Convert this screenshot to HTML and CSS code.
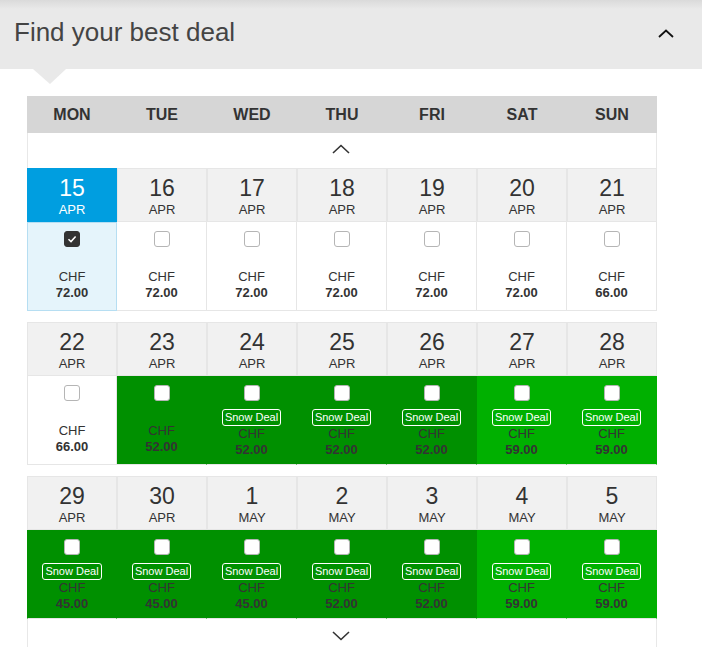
FILE: index.html
```
<!DOCTYPE html>
<html lang="en">
<head>
<meta charset="utf-8">
<title>Find your best deal</title>
<link rel="stylesheet" href="styles.css">
</head>
<body>
<div class="panel">
  <header class="bar">
    <h1>Find your best deal</h1>
    <svg class="bar-chev" width="16" height="9" viewBox="0 0 16 9"><path d="M1 8 L8 1.5 L15 8" fill="none" stroke="#111" stroke-width="1.8"/></svg>
  </header>
  <span class="pointer"></span>

  <div class="cal">
    <div class="dow">
      <div>MON</div><div>TUE</div><div>WED</div><div>THU</div><div>FRI</div><div>SAT</div><div>SUN</div>
    </div>
    <div class="nav">
      <svg width="18" height="10" viewBox="0 0 18 10"><path d="M1 9 L9 1.5 L17 9" fill="none" stroke="#333" stroke-width="1.6"/></svg>
    </div>

    <div class="week">
      <div class="wk-head">
        <div class="d sel"><span class="n">15</span><span class="m">APR</span></div>
        <div class="d"><span class="n">16</span><span class="m">APR</span></div>
        <div class="d"><span class="n">17</span><span class="m">APR</span></div>
        <div class="d"><span class="n">18</span><span class="m">APR</span></div>
        <div class="d"><span class="n">19</span><span class="m">APR</span></div>
        <div class="d"><span class="n">20</span><span class="m">APR</span></div>
        <div class="d"><span class="n">21</span><span class="m">APR</span></div>
      </div>
      <div class="wk-body">
        <div class="c sel"><span class="cb on"><svg width="14" height="14" viewBox="0 0 14 14"><path d="M3.5 7.2 L6 9.6 L10.6 4.4" fill="none" stroke="#fff" stroke-width="1.5"/></svg></span><span class="slot"></span><span class="cur">CHF</span><span class="pr">72.00</span></div>
        <div class="c"><span class="cb"></span><span class="slot"></span><span class="cur">CHF</span><span class="pr">72.00</span></div>
        <div class="c"><span class="cb"></span><span class="slot"></span><span class="cur">CHF</span><span class="pr">72.00</span></div>
        <div class="c"><span class="cb"></span><span class="slot"></span><span class="cur">CHF</span><span class="pr">72.00</span></div>
        <div class="c"><span class="cb"></span><span class="slot"></span><span class="cur">CHF</span><span class="pr">72.00</span></div>
        <div class="c"><span class="cb"></span><span class="slot"></span><span class="cur">CHF</span><span class="pr">72.00</span></div>
        <div class="c"><span class="cb"></span><span class="slot"></span><span class="cur">CHF</span><span class="pr">66.00</span></div>
      </div>
    </div>

    <div class="week">
      <div class="wk-head">
        <div class="d"><span class="n">22</span><span class="m">APR</span></div>
        <div class="d"><span class="n">23</span><span class="m">APR</span></div>
        <div class="d"><span class="n">24</span><span class="m">APR</span></div>
        <div class="d"><span class="n">25</span><span class="m">APR</span></div>
        <div class="d"><span class="n">26</span><span class="m">APR</span></div>
        <div class="d"><span class="n">27</span><span class="m">APR</span></div>
        <div class="d"><span class="n">28</span><span class="m">APR</span></div>
      </div>
      <div class="wk-body">
        <div class="c"><span class="cb"></span><span class="slot"></span><span class="cur">CHF</span><span class="pr">66.00</span></div>
        <div class="c g1"><span class="cb"></span><span class="slot"></span><span class="cur">CHF</span><span class="pr">52.00</span></div>
        <div class="c g1"><span class="cb"></span><span class="slot has"><span class="badge">Snow Deal</span></span><span class="cur">CHF</span><span class="pr">52.00</span></div>
        <div class="c g1"><span class="cb"></span><span class="slot has"><span class="badge">Snow Deal</span></span><span class="cur">CHF</span><span class="pr">52.00</span></div>
        <div class="c g1"><span class="cb"></span><span class="slot has"><span class="badge">Snow Deal</span></span><span class="cur">CHF</span><span class="pr">52.00</span></div>
        <div class="c g2"><span class="cb"></span><span class="slot has"><span class="badge">Snow Deal</span></span><span class="cur">CHF</span><span class="pr">59.00</span></div>
        <div class="c g2"><span class="cb"></span><span class="slot has"><span class="badge">Snow Deal</span></span><span class="cur">CHF</span><span class="pr">59.00</span></div>
      </div>
    </div>

    <div class="week week-last">
      <div class="wk-head">
        <div class="d"><span class="n">29</span><span class="m">APR</span></div>
        <div class="d"><span class="n">30</span><span class="m">APR</span></div>
        <div class="d"><span class="n">1</span><span class="m">MAY</span></div>
        <div class="d"><span class="n">2</span><span class="m">MAY</span></div>
        <div class="d"><span class="n">3</span><span class="m">MAY</span></div>
        <div class="d"><span class="n">4</span><span class="m">MAY</span></div>
        <div class="d"><span class="n">5</span><span class="m">MAY</span></div>
      </div>
      <div class="wk-body">
        <div class="c g1"><span class="cb"></span><span class="slot has"><span class="badge">Snow Deal</span></span><span class="cur">CHF</span><span class="pr">45.00</span></div>
        <div class="c g1"><span class="cb"></span><span class="slot has"><span class="badge">Snow Deal</span></span><span class="cur">CHF</span><span class="pr">45.00</span></div>
        <div class="c g1"><span class="cb"></span><span class="slot has"><span class="badge">Snow Deal</span></span><span class="cur">CHF</span><span class="pr">45.00</span></div>
        <div class="c g1"><span class="cb"></span><span class="slot has"><span class="badge">Snow Deal</span></span><span class="cur">CHF</span><span class="pr">52.00</span></div>
        <div class="c g1"><span class="cb"></span><span class="slot has"><span class="badge">Snow Deal</span></span><span class="cur">CHF</span><span class="pr">52.00</span></div>
        <div class="c g2"><span class="cb"></span><span class="slot has"><span class="badge">Snow Deal</span></span><span class="cur">CHF</span><span class="pr">59.00</span></div>
        <div class="c g2"><span class="cb"></span><span class="slot has"><span class="badge">Snow Deal</span></span><span class="cur">CHF</span><span class="pr">59.00</span></div>
      </div>
    </div>

    <div class="nav nav-down">
      <svg width="18" height="10" viewBox="0 0 18 10"><path d="M1 1 L9 8.5 L17 1" fill="none" stroke="#333" stroke-width="1.6"/></svg>
    </div>
  </div>
</div>
</body>
</html>
```

FILE: styles.css
```
html, body {
  margin: 0;
  padding: 0;
  overflow: hidden;
  background: #fff;
}
body {
  font-family: "Liberation Sans", Arial, sans-serif;
  color: #333;
}
.panel {
  position: relative;
  width: 702px;
}
.bar {
  height: 69px;
  background: linear-gradient(#dadada 0px, #e9e9e9 9px, #e9e9e9 100%);
  display: flex;
  justify-content: space-between;
  align-items: flex-start;
  padding: 0 28px 0 14px;
  box-sizing: border-box;
}
.bar h1 {
  margin: 17px 0 0;
  font-size: 26px;
  line-height: 30px;
  font-weight: normal;
  color: #444;
}
.bar-chev {
  margin-top: 29px;
}
.pointer {
  position: absolute;
  left: 33px;
  top: 69px;
  width: 0;
  height: 0;
  border-left: 17px solid transparent;
  border-right: 16px solid transparent;
  border-top: 15px solid #e9e9e9;
}
.cal {
  margin: 27px 0 0 27px;
  width: 630px;
}
.dow {
  display: grid;
  grid-template-columns: repeat(7, 90px);
  height: 37px;
  background: #d6d6d6;
  align-items: center;
  text-align: center;
  font-weight: bold;
  font-size: 16px;
  color: #333;
}
.nav {
  height: 35px;
  box-sizing: border-box;
  border-left: 1px solid #e8e8e8;
  border-right: 1px solid #e8e8e8;
  display: flex;
  justify-content: center;
  align-items: flex-start;
  padding-top: 11px;
  padding-right: 2px;
}
.nav-down {
  height: 28px;
  padding-top: 12px;
}
.nav svg {
  display: block;
}
.week {
  margin-bottom: 11px;
}
.week.week-last {
  margin-bottom: 0;
}
.wk-head {
  display: grid;
  grid-template-columns: repeat(7, 90px);
  height: 54px;
}
.d {
  box-sizing: border-box;
  border: 1px solid #e6e6e6;
  background: #f1f1f1;
  display: flex;
  flex-direction: column;
  align-items: center;
  padding-top: 8px;
  color: #333;
}
.d .n {
  font-size: 23px;
  line-height: 23px;
}
.d .m {
  margin-top: 3px;
  font-size: 13px;
  line-height: 13px;
}
.d.sel {
  background: #009ee0;
  border-color: #009ee0;
  color: #fff;
}
.wk-body {
  display: grid;
  grid-template-columns: repeat(7, 90px);
  height: 89px;
}
.c {
  box-sizing: border-box;
  border-right: 1px solid #e6e6e6;
  border-bottom: 1px solid #e6e6e6;
  background: #fff;
  display: flex;
  flex-direction: column;
  align-items: center;
  padding-top: 9px;
  font-size: 13px;
  line-height: 16px;
  color: #333;
}
.c:first-child {
  border-left: 1px solid #e6e6e6;
}
.c.sel {
  background: #e5f4fb;
  border: 1px solid #b6def2;
  padding-top: 8px;
}
.c.g1 {
  background: #009000;
  border-right-color: transparent;
  color: #333;
}
.c.g2 {
  background: #00b000;
  border-right-color: transparent;
  color: #333;
}
.c.g1:first-child {
  border-left-color: transparent;
}
.cb {
  width: 16px;
  height: 16px;
  box-sizing: border-box;
  border: 1px solid #b5b5b5;
  border-radius: 3px;
  background: #fff;
  display: flex;
  align-items: center;
  justify-content: center;
}
.cb.on {
  background: #333;
  border-color: #333;
}
.cb svg {
  display: block;
}
.slot {
  height: 22px;
  display: flex;
  align-items: flex-start;
}
.slot.has {
  height: 25px;
}
.badge {
  margin-top: 8px;
  font-size: 11px;
  line-height: 13px;
  padding: 1px 2px;
  border: 1px solid #fff;
  border-radius: 3px;
  color: #fff;
}
.pr {
  font-weight: bold;
}
```
